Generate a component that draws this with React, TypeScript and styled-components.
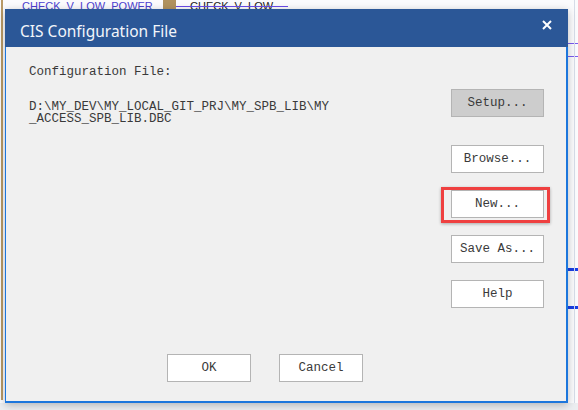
import * as React from 'react';
import styled, {createGlobalStyle} from 'styled-components';

const GlobalStyle = createGlobalStyle`
  html, body {
    margin: 0;
    padding: 0;
    background: #ffffff;
  }
  body {
    width: 578px;
    height: 410px;
    overflow: hidden;
  }
`;

const mono = `"Liberation Mono", "DejaVu Sans Mono", monospace`;

const SDesktop = styled('div')`
  position: relative;
  width: 578px;
  height: 410px;
  overflow: hidden;
  background: #fbfbfd;
`;

// schematic canvas behind the dialog
const SNetLabel = styled('span')<{$x: number; $y: number; $color: string}>`
  position: absolute;
  left: ${p => p.$x}px;
  top: ${p => p.$y}px;
  font-family: "Liberation Sans", Arial, sans-serif;
  font-size: 11px;
  line-height: 12px;
  color: ${p => p.$color};
  white-space: nowrap;
`;

const SBlock = styled('div')<{$x: number; $y: number; $w: number; $h: number; $color: string}>`
  position: absolute;
  left: ${p => p.$x}px;
  top: ${p => p.$y}px;
  width: ${p => p.$w}px;
  height: ${p => p.$h}px;
  background: ${p => p.$color};
`;

const SDialog = styled('div')`
  position: absolute;
  left: 5px;
  top: 9px;
  width: 563px;
  height: 394px;
  display: flex;
  flex-direction: column;
  box-shadow: 0 2px 8px rgba(0, 0, 0, 0.25);
`;

const STitleBar = styled('div')`
  height: 38px;
  flex: none;
  box-sizing: border-box;
  display: flex;
  align-items: center;
  justify-content: space-between;
  padding: 5px 16px 0 15px;
  background: #2b5797;
  color: #f2f5fa;
  font-family: "Noto Sans", "Open Sans", sans-serif;
  font-size: 15.5px;
`;

const SClose = styled('svg')`
  width: 10px;
  height: 10px;
  margin-top: -12px;
`;

const SBody = styled('div')`
  flex: 1;
  display: flex;
  flex-direction: column;
  background: #f0f0f0;
  border: 1px solid #1c76dc;
  border-width: 0 2px 2px 1px;
`;

const SMain = styled('div')`
  display: flex;
  align-items: flex-start;
  justify-content: space-between;
`;

const SInfo = styled('div')`
  padding: 19px 0 0 23px;
  font-family: ${mono};
  font-size: 12.5px;
  line-height: 12px;
  color: #3a3a3a;
`;

const SPath = styled('div')`
  margin-top: 23px;
  width: 302px;
  word-break: break-all;
`;

const SActions = styled('div')`
  display: flex;
  flex-direction: column;
  gap: 17px;
  padding: 42px 22px 0 0;
`;

const SButton = styled('button')<{$disabled?: boolean; $wide?: boolean}>`
  width: ${p => (p.$wide ? 84 : 93)}px;
  height: 28px;
  padding: 0;
  border: 1px solid #b4b4b4;
  background: ${p => (p.$disabled ? '#cdcdcd' : '#ffffff')};
  font-family: ${mono};
  font-size: 12.5px;
  color: #3a3a3a;
`;

const SSetup = styled(SButton)`
  margin-bottom: 11px;
`;

const SMarked = styled('div')`
  position: relative;
  width: 93px;
  height: 28px;
`;

const SHighlight = styled('div')`
  position: absolute;
  left: -10px;
  top: -3px;
  width: 109px;
  height: 36px;
  box-sizing: border-box;
  border: 3px solid #ef4040;
  box-shadow: 0 1px 3px rgba(0, 0, 0, 0.3);
  pointer-events: none;
`;

const SFooter = styled('div')`
  margin-top: auto;
  display: flex;
  gap: 28px;
  padding: 0 0 19px 161px;
`;

export default function App() {
  return (
    <SDesktop>
      <GlobalStyle/>
      <SNetLabel $x={22} $y={0} $color="#4d3fd0">CHECK_V_LOW_POWER</SNetLabel>
      <SBlock $x={163} $y={0} $w={13} $h={9} $color="#b0925e"/>
      <SNetLabel $x={190} $y={0} $color="#222">CHECK_V_LOW</SNetLabel>
      <SBlock $x={176} $y={6} $w={112} $h={1} $color="#6a4be8"/>
      <SBlock $x={1} $y={0} $w={2} $h={400} $color="#b89966"/>
      <SBlock $x={568} $y={43} $w={10} $h={1} $color="#7b5cf0"/>
      <SBlock $x={568} $y={56} $w={10} $h={1} $color="#7b5cf0"/>
      <SBlock $x={568} $y={268} $w={10} $h={3} $color="#1a3fe6"/>
      <SBlock $x={568} $y={306} $w={10} $h={3} $color="#1a3fe6"/>
      <SBlock $x={574} $y={0} $w={1} $h={410} $color="#d6dce8"/>
      <SBlock $x={0} $y={403} $w={578} $h={7} $color="#eceef1"/>

      <SDialog>
        <STitleBar>
          <span>CIS Configuration File</span>
          <SClose viewBox="0 0 10 10">
            <path d="M1 1 L9 9 M9 1 L1 9" stroke="#ffffff" strokeWidth="2"/>
          </SClose>
        </STitleBar>
        <SBody>
          <SMain>
            <SInfo>
              <div>Configuration File:</div>
              <SPath>D:\MY_DEV\MY_LOCAL_GIT_PRJ\MY_SPB_LIB\MY_ACCESS_SPB_LIB.DBC</SPath>
            </SInfo>
            <SActions>
              <SSetup $disabled>Setup...</SSetup>
              <SButton>Browse...</SButton>
              <SMarked>
                <SButton>New...</SButton>
                <SHighlight/>
              </SMarked>
              <SButton>Save As...</SButton>
              <SButton>Help</SButton>
            </SActions>
          </SMain>
          <SFooter>
            <SButton $wide>OK</SButton>
            <SButton $wide>Cancel</SButton>
          </SFooter>
        </SBody>
      </SDialog>
    </SDesktop>
  );
}
